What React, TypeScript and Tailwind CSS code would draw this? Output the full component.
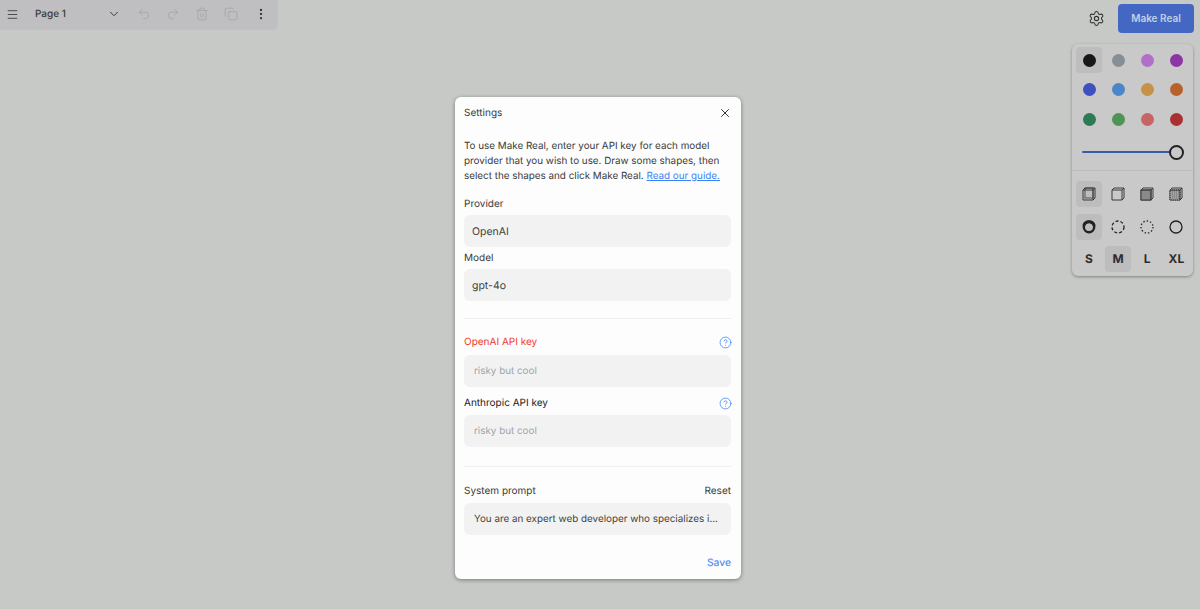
import React from "react";
import { Menu, ChevronDown, Undo2, Redo2, Trash2, Copy, EllipsisVertical, Settings, X, CircleHelp } from "lucide-react";

const colors = ["#171717", "#868e96", "#b26fc9", "#8c35a3", "#3d50bd", "#4a86c8", "#c6924a", "#b9612a", "#2f7a56", "#4f9455", "#c76565", "#ab3030"];

function Cell({ active, children }: { active?: boolean; children: React.ReactNode }) {
  return (
    <div className={`w-[26px] h-[26px] flex items-center justify-center rounded-[4px] ${active ? "bg-[#bdbdbd]" : ""}`}>{children}</div>
  );
}

function FillIcon({ kind }: { kind: number }) {
  return (
    <svg width="14" height="14" viewBox="0 0 14 14" fill="none" stroke="#3a3a3a" strokeWidth="1">
      <path d="M3 1H13V11L11 13H1V3Z" fill="none" />
      {kind === 2 && <rect x="1" y="3" width="10" height="10" fill="#8a8a8a" />}
      {kind === 3 && <rect x="1" y="3" width="10" height="10" fill="#8a8a8a" strokeDasharray="1 1" />}
      {kind === 3 && <path d="M2 5H10M2 7H10M2 9H10M2 11H10" stroke="#bdbdbd" strokeDasharray="1 1" />}
      <path d="M1 3H11V13M11 3L13 1" />
      {kind === 0 && <rect x="3" y="1" width="8" height="10" strokeOpacity="0.8" />}
    </svg>
  );
}

function DashIcon({ kind }: { kind: number }) {
  const dash = kind === 1 ? "3 2" : kind === 2 ? "1.4 2" : undefined;
  return (
    <svg width="14" height="14" viewBox="0 0 14 14" fill="none" stroke="#222">
      {kind === 0 ? (
        <>
          <circle cx="7" cy="7" r="5.2" strokeWidth="2.4" />
          <path d="M1.8 5.6A5.4 5.4 0 0 1 12.2 5.6" strokeWidth="3" />
        </>
      ) : (
        <circle cx="7" cy="7" r="6" strokeWidth="1.3" strokeDasharray={dash} />
      )}
    </svg>
  );
}

function Field({ value, placeholder, indent, large, flush }: { value?: string; placeholder?: string; indent?: boolean; large?: boolean; flush?: boolean }) {
  return (
    <div className={`h-[32px] rounded-[6px] bg-[#f2f2f2] flex items-center whitespace-nowrap ${flush ? "" : "pt-[1px]"} ${large ? "text-[10.5px]" : "text-[9.85px]"} ${indent ? "px-[10px]" : "px-[8px]"} ${placeholder ? "text-[#a0a3a9]" : "text-[#3f3f3f]"}`}>
      {value ?? placeholder}
    </div>
  );
}

export default function App() {
  return (
    <div className="relative h-[609px] w-full overflow-hidden bg-[#c7c9c7] font-['Inter',sans-serif] [text-rendering:geometricPrecision] text-[#333]">
      <div className="flex items-start justify-between">
        <div className="h-[30px] w-[278px] pb-[2px] rounded-br-[6px] bg-[#bfbfc1] flex items-center text-[#3a3a3a]">
          <Menu size={13} strokeWidth={1.6} className="ml-[6px]" />
          <span className="ml-[16px] w-[72px] text-[10px] font-medium">Page 1</span>
          <ChevronDown size={14} strokeWidth={1.7} />
          <div className="flex items-center gap-[15.3px] ml-[15.5px] text-[#a2a2a4]">
            <Undo2 size={14} strokeWidth={1.3} />
            <Redo2 size={14} strokeWidth={1.3} />
            <Trash2 size={14} strokeWidth={1.3} />
            <Copy size={14} strokeWidth={1.3} />
          </div>
          <EllipsisVertical size={14} strokeWidth={2} className="ml-[15.5px]" />
        </div>
        <div className="flex flex-col items-end mr-[6px] mt-[4px]">
          <div className="flex items-center gap-[13px]">
            <Settings size={17} strokeWidth={1.5} className="text-[#333]" />
            <button className="h-[29px] w-[76px] rounded-[4px] bg-[#4467c4] text-[#c3cfe6] text-[10px] font-semibold">Make Real</button>
          </div>
          <div className="mt-[11px] mr-[1px] w-[121px] h-[232px] rounded-[6px] bg-[#c9c9c9] shadow-[0_1px_3px_rgba(0,0,0,0.35)] px-[4px] pt-[3px] flex flex-col">
            <div className="grid grid-cols-4 gap-y-[3.5px] gap-x-[3.5px]">
              {colors.map((c, i) => (
                <Cell key={c} active={i === 0}>
                  <span className="block w-[13px] h-[13px] rounded-full" style={{ backgroundColor: c }} />
                </Cell>
              ))}
            </div>
            <div className="relative h-[32px] mt-[4px] mx-[6px] flex items-center">
              <div className="h-[2.5px] w-full bg-[#3c5aaa] rounded-full" />
              <div className="absolute right-[-1px] w-[15px] h-[15px] rounded-full border-2 border-[#222] bg-[#c9c9c9]" />
            </div>
            <div className="h-px bg-[#bcbcbc] -mx-[4px] mb-[10px] mt-[2px]" />
            <div className="grid grid-cols-4 gap-y-[6.5px] gap-x-[3.5px]">
              {[0, 1, 2, 3].map((k) => (
                <Cell key={k} active={k === 0}><FillIcon kind={k} /></Cell>
              ))}
              {[0, 1, 2, 3].map((k) => (
                <Cell key={k} active={k === 0}><DashIcon kind={k} /></Cell>
              ))}
              {["S", "M", "L", "XL"].map((s) => (
                <Cell key={s} active={s === "M"}><span className="text-[12px] font-bold text-[#2d2d2d]">{s}</span></Cell>
              ))}
            </div>
          </div>
        </div>
      </div>

      <div className="absolute left-[455px] top-[97px] w-[286px] h-[482px] rounded-[6px] bg-[#fdfdfd] shadow-[0_1px_4px_rgba(0,0,0,0.4)] pl-[9px] pr-[10px] flex flex-col">
        <div className="flex items-center justify-between h-[32px] text-[10px] text-[#3a3a3a]">
          <span>Settings</span>
          <X size={14} strokeWidth={1.7} className="mr-[-1px] text-[#333]" />
        </div>
        <p className="mt-[10px] text-[9.85px] leading-[15px] text-[#3a3a3a] whitespace-nowrap">
          To use Make Real, enter your API key for each model<br />
          provider that you wish to use. Draw some shapes, then<br />
          select the shapes and click Make Real. <a className="text-[#3b82f6] underline">Read our guide.</a>
        </p>
        <label className="mt-[14px] mb-[4px] text-[10px] leading-[13px] text-[#3a3a3a]">Provider</label>
        <Field value="OpenAI" large />
        <label className="mt-[5px] mb-[4px] text-[10px] leading-[13px] text-[#3a3a3a]">Model</label>
        <Field value="gpt-4o" large />
        <div className="h-px bg-[#efefef] mt-[17px] mb-[17px]" />
        <div className="flex items-center justify-between h-[13px] mb-[6px] text-[10px] text-[#f03b2e]">
          <span>OpenAI API key</span>
          <CircleHelp size={13} strokeWidth={1.4} className="mr-[-1px] text-[#3b82f6]" />
        </div>
        <Field placeholder="risky but cool" indent />
        <div className="flex items-center justify-between h-[13px] mt-[10px] mb-[5px] text-[10px] text-[#222]">
          <span>Anthropic API key</span>
          <CircleHelp size={13} strokeWidth={1.4} className="mr-[-1px] text-[#3b82f6]" />
        </div>
        <Field placeholder="risky but cool" indent />
        <div className="h-px bg-[#efeff5] mt-[19px] mb-[18px]" />
        <div className="flex items-center justify-between h-[13px] mb-[5px] text-[10px] text-[#3a3a3a]">
          <span>System prompt</span>
          <span>Reset</span>
        </div>
        <Field value="You are an expert web developer who specializes i..." indent flush />
        <div className="mt-auto mb-[8px] text-right text-[10.3px] font-medium text-[#5a8bee]">Save</div>
      </div>
    </div>
  );
}
